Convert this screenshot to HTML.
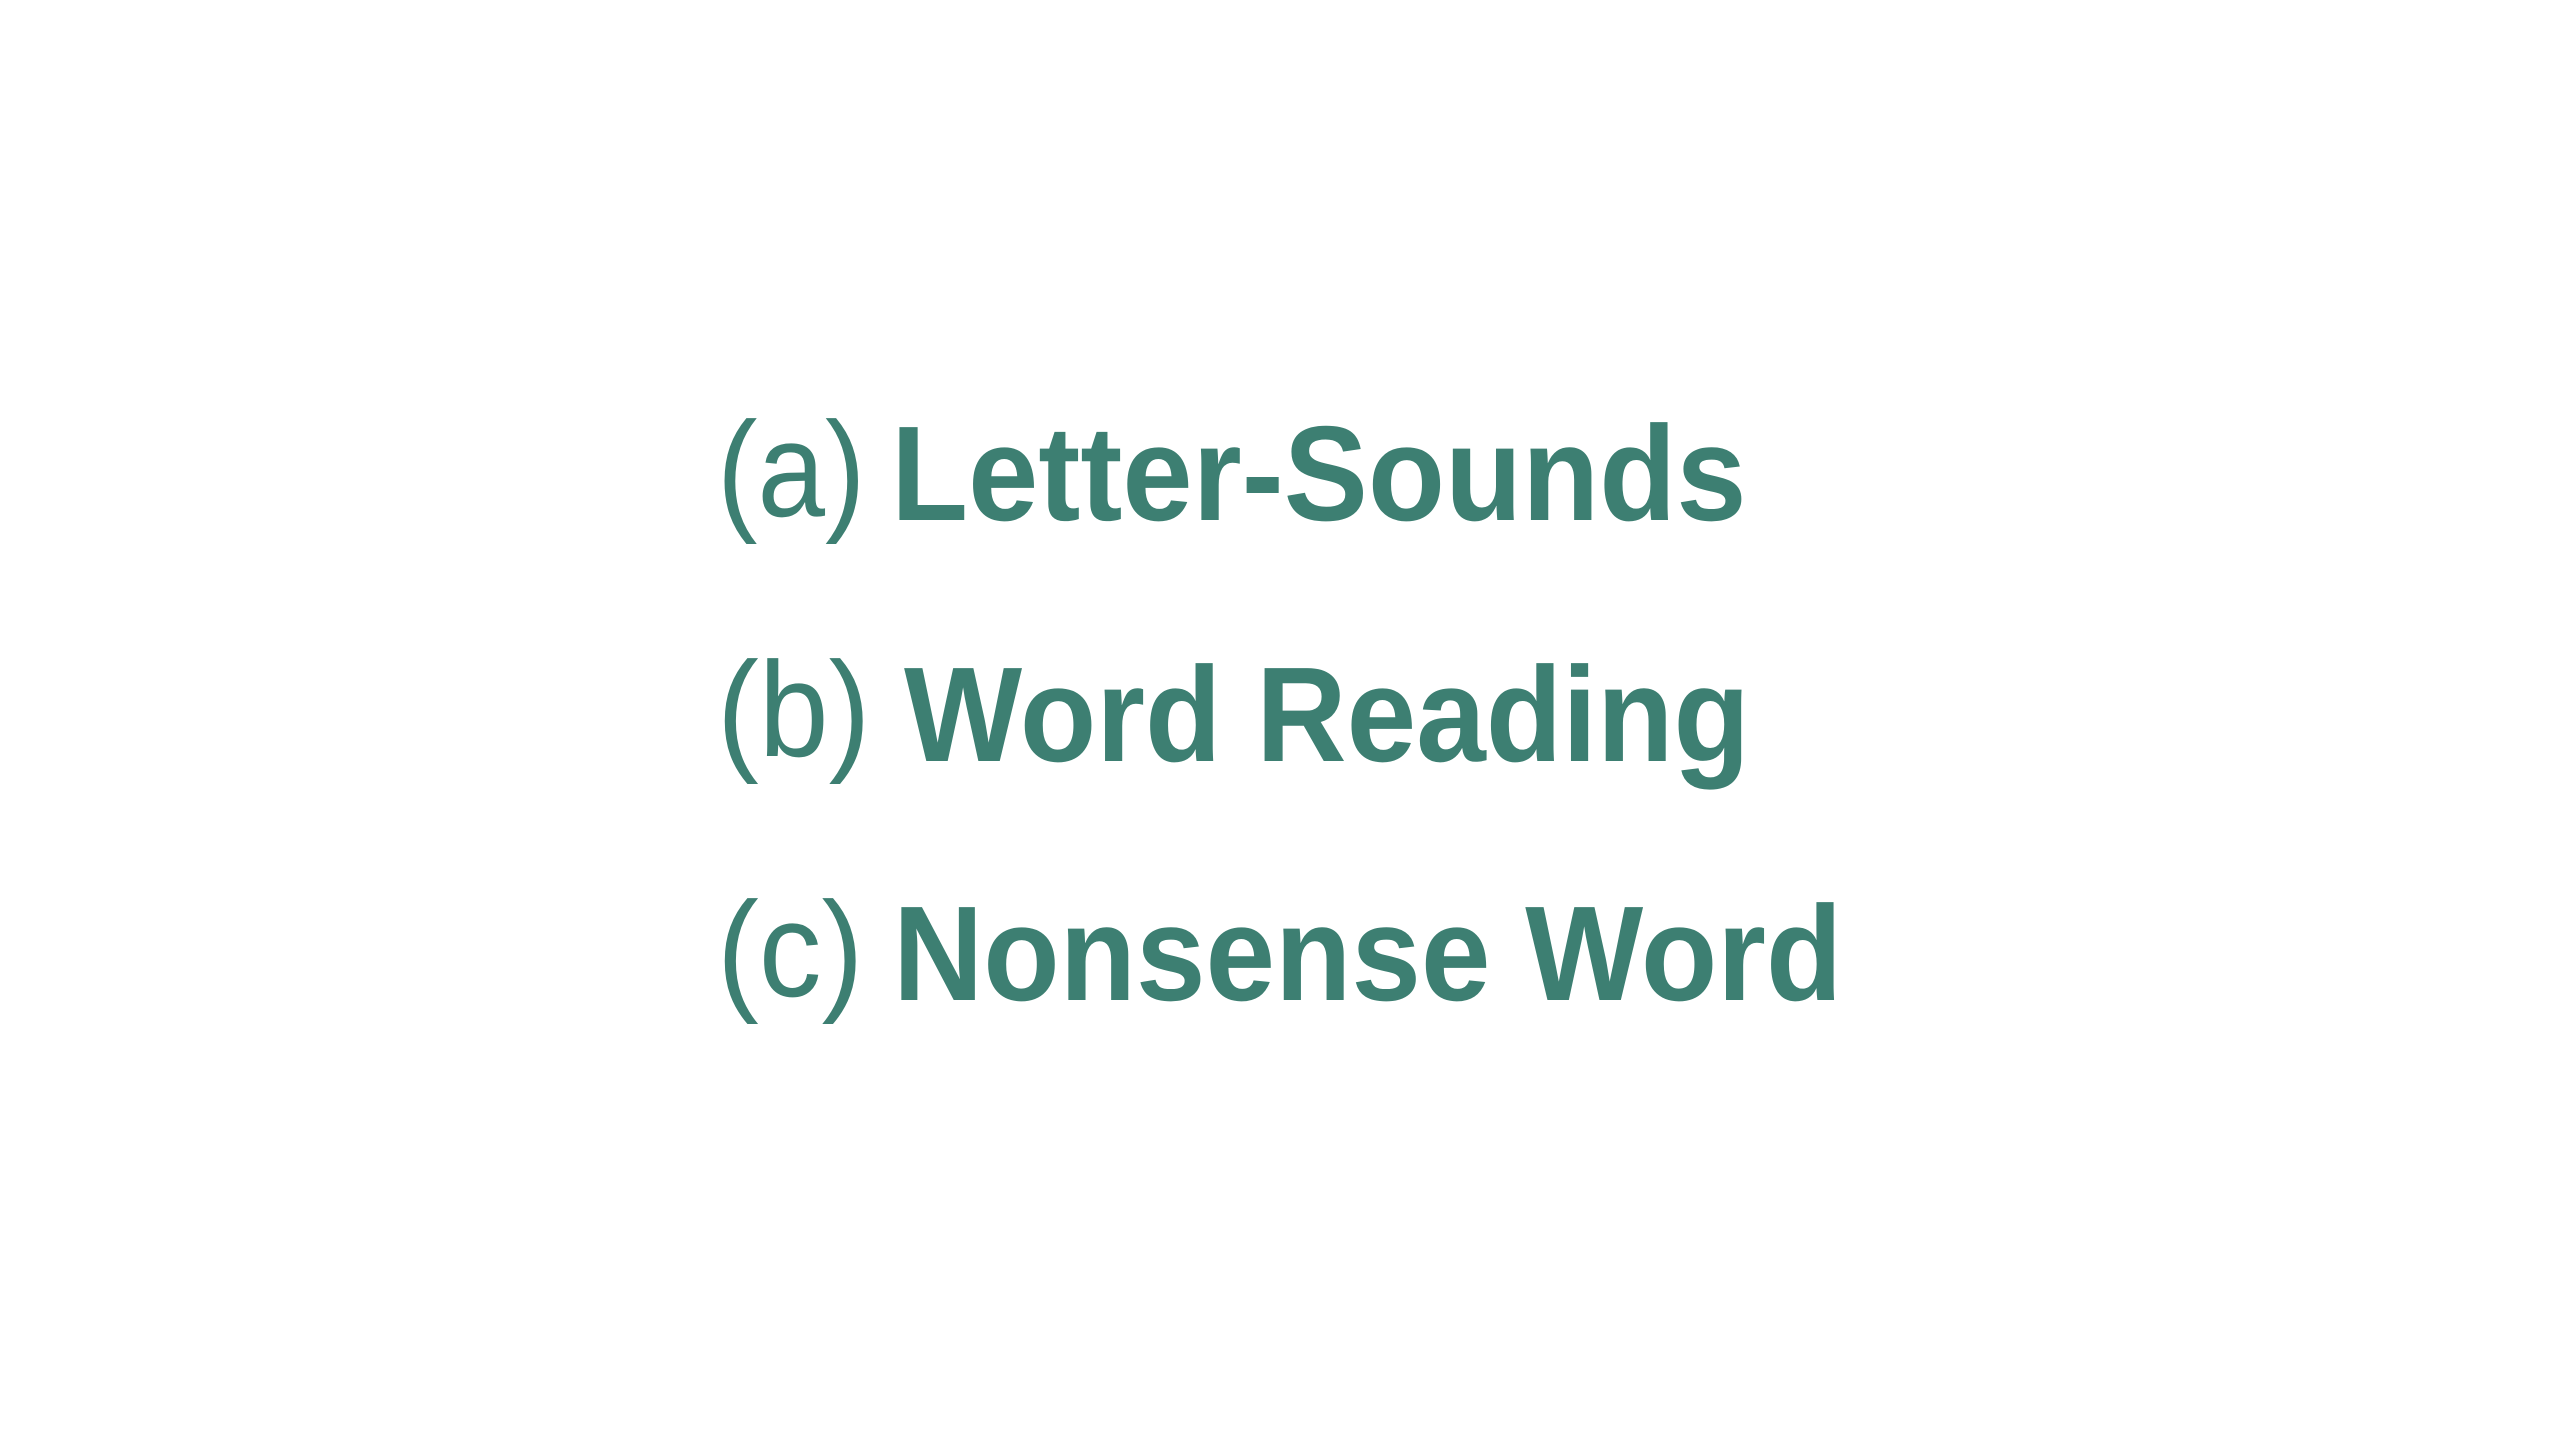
<!DOCTYPE html>
<html><head><meta charset="utf-8"><style>
html,body{margin:0;padding:0;background:#fff;width:2553px;height:1437px;overflow:hidden}
.t{position:absolute;font-family:"Liberation Sans",sans-serif;font-size:135px;color:#3d7f72;line-height:1;white-space:nowrap;transform-origin:0 0}
.l{font-weight:normal}
.b{font-weight:bold}
</style></head><body>
<div class="t l" style="left:717px;top:402px;transform:scaleX(0.9)">(a)</div>
<div class="t b" style="left:891px;top:406px;transform:scaleX(0.935)">Letter-Sounds</div>
<div class="t l" style="left:717px;top:642px;transform:scaleX(0.93)">(b)</div>
<div class="t b" style="left:904px;top:647px;transform:scaleX(0.927)">Word Reading</div>
<div class="t l" style="left:717px;top:882px;transform:scaleX(0.93)">(c)</div>
<div class="t b" style="left:893px;top:886px;transform:scaleX(0.926)">Nonsense Word</div>
</body></html>
